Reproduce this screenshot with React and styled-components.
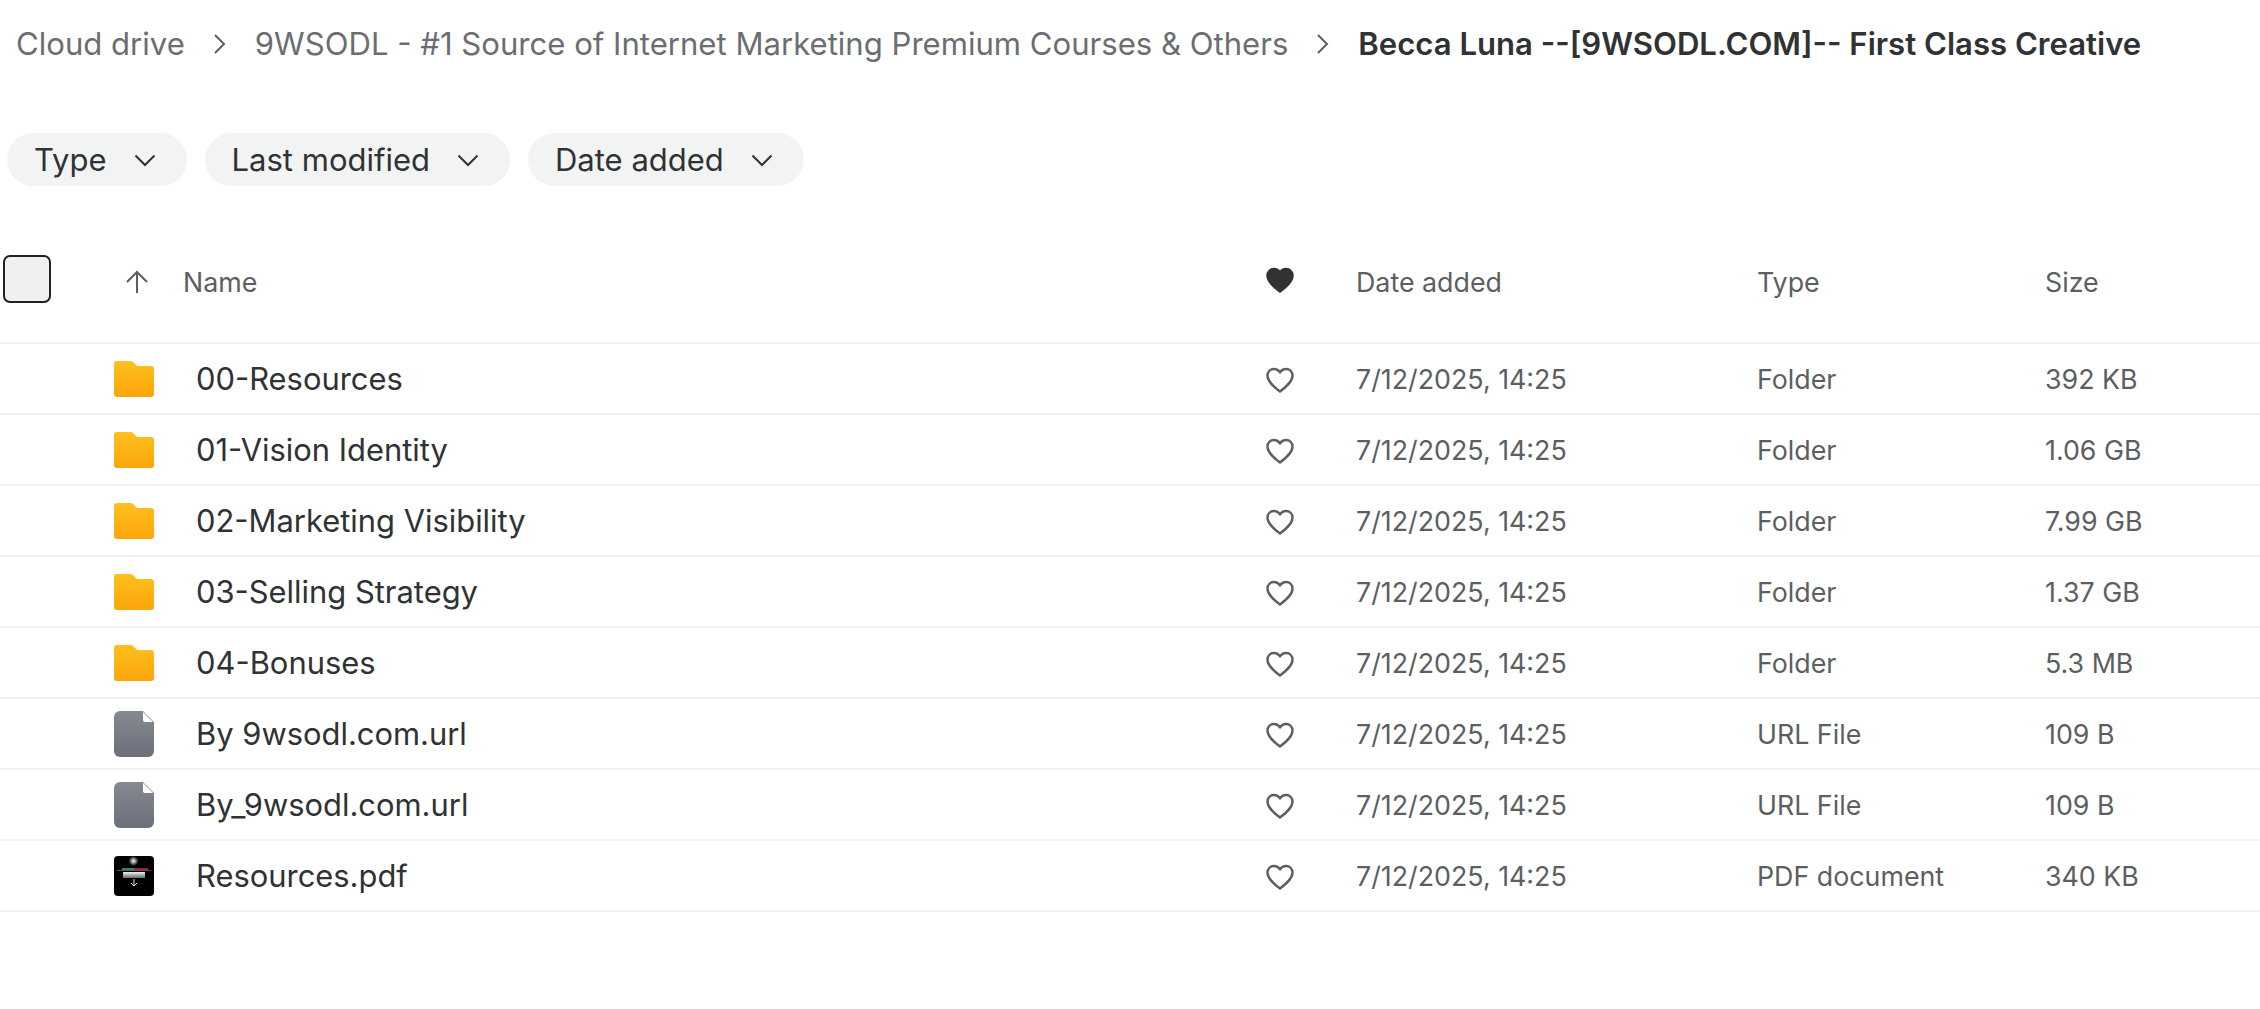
import React from "react";
import styled, { createGlobalStyle } from "styled-components";

const Global = createGlobalStyle`
  html, body { margin: 0; padding: 0; background: #fff; }
  body { font-family: "Inter", "Liberation Sans", sans-serif; color: #303233; }
`;
const Page = styled.div`
  width: 2260px;
  height: 1009px;
  overflow: hidden;
  background: #fff;
`;
const Breadcrumb = styled.nav`
  display: flex;
  align-items: center;
  height: 88px;
  padding-left: 16px;
  font-size: 31.1px;
  white-space: nowrap;
`;
const Crumb = styled.span`
  color: ${(p) => (p.$current ? "#303233" : "#6b6e70")};
  font-weight: ${(p) => (p.$current ? 600 : 400)};
`;
const CrumbSep = styled.svg`
  width: 24px;
  height: 24px;
  margin: 0 23px;
  fill: none;
  stroke: #5c5f61;
  stroke-width: 2;
  flex: none;
`;
const Filters = styled.div`
  display: flex;
  gap: 18px;
  padding: 45px 0 0 7px;
`;
const Chip = styled.div`
  display: flex;
  align-items: center;
  gap: 26px;
  height: 53px;
  padding: 0 30px 0 27px;
  border-radius: 27px;
  background: #f2f4f4;
  font-size: 31px;
  color: #303233;
`;
const Chevron = styled.svg`
  width: 24px;
  height: 24px;
  fill: none;
  stroke: #303233;
  stroke-width: 2;
`;
const columns = "114px 1152px 90px 401px 288px 1fr";
const HeaderRow = styled.div`
  display: grid;
  grid-template-columns: ${columns};
  align-items: center;
  height: 158px;
  padding-top: 36px;
  border-bottom: 2px solid #f0f1f1;
  box-sizing: border-box;
  font-size: 26.8px;
  color: #5c5f61;
`;
const Check = styled.div`
  width: 48px;
  height: 48px;
  margin: 0 0 6px 3px;
  box-sizing: border-box;
  border: 2px solid #1f2122;
  border-radius: 7px;
  background: #eff0f2;
`;
const NameHead = styled.div`
  display: flex;
  align-items: center;
  gap: 33px;
  margin-left: 10px;
`;
const SortArrow = styled.svg`
  width: 26px;
  height: 26px;
  fill: none;
  stroke: #5c5f61;
  stroke-width: 2;
`;
const Row = styled.div`
  display: grid;
  grid-template-columns: ${columns};
  align-items: center;
  height: 71px;
  border-bottom: 2px solid #f0f1f1;
  box-sizing: border-box;
`;
const NameCell = styled.div`
  grid-column: 2;
  display: flex;
  align-items: center;
  gap: 42px;
`;
const FileIcon = styled.svg`
  width: 40px;
  height: ${(p) => p.$h || 40}px;
  display: block;
  flex: none;
`;
const Name = styled.div`
  font-size: 30.9px;
  color: #303233;
  white-space: nowrap;
`;
const Heart = styled.svg`
  width: 32px;
  height: 32px;
  display: block;
  margin: ${(p) => (p.$filled ? "0 0 5px -2px" : "2px 0 0 -2px")};
`;
const Cell = styled.div`
  font-size: 26.8px;
  color: #5c5f61;
  white-space: nowrap;
`;

const ChevronDown = () => (
  <Chevron viewBox="0 0 24 24"><path d="M2.500 7.500L12 17l9.500-9.500" /></Chevron>
);
const HeartIcon = ({ filled }) => (
  <Heart viewBox="0 0 32 32" $filled={filled}>
    <path
      d="M16 27.500C9.500 22.500 3.500 17.500 3.500 11.500 3.500 7.500 6.500 5 9.800 5c2.600 0 4.900 1.300 6.200 3.500C17.300 6.300 19.600 5 22.200 5c3.300 0 6.300 2.500 6.300 6.500 0 6-6 11-12.500 16z"
      fill={filled ? "#303233" : "none"}
      stroke={filled ? "#303233" : "#5c5f61"}
      strokeWidth="2.400"
      strokeLinejoin="round"
    />
  </Heart>
);
const Folder = () => (
  <FileIcon viewBox="0 0 40 40">
    <defs>
      <linearGradient id="fold" x1="0" y1="0" x2="0" y2="1">
        <stop offset="0" stopColor="#ffc01e" />
        <stop offset="1" stopColor="#fba50a" />
      </linearGradient>
    </defs>
    <path d="M0 5a3 3 0 0 1 3-3h13.500c1 0 1.900.4 2.600 1.100L23 7h14a3 3 0 0 1 3 3v25a3 3 0 0 1-3 3H3a3 3 0 0 1-3-3z" fill="url(#fold)" />
  </FileIcon>
);
const Generic = () => (
  <FileIcon viewBox="0 0 40 46" $h={46}>
    <defs>
      <linearGradient id="gen" x1="0" y1="0" x2="0" y2="1">
        <stop offset="0" stopColor="#858a92" />
        <stop offset="1" stopColor="#6b6f79" />
      </linearGradient>
    </defs>
    <path d="M6 0h23l11 11v29a6 6 0 0 1-6 6H6a6 6 0 0 1-6-6V6a6 6 0 0 1 6-6z" fill="url(#gen)" />
    <path d="M29 1l10 10h-8a2 2 0 0 1-2-2z" fill="#fff" />
  </FileIcon>
);
const Pdf = () => (
  <FileIcon viewBox="0 0 40 40">
    <defs>
      <linearGradient id="bar" x1="0" y1="0" x2="0" y2="1">
        <stop offset="0" stopColor="#f2f2f2" />
        <stop offset="1" stopColor="#6a6a6a" />
      </linearGradient>
      <radialGradient id="glow">
        <stop offset="0" stopColor="#fff" />
        <stop offset="1" stopColor="#000" />
      </radialGradient>
    </defs>
    <rect width="40" height="40" rx="4" fill="#000" />
    <circle cx="19.500" cy="5" r="5" fill="url(#glow)" />
    <rect x="3" y="14" width="34" height="1" fill="#555" />
    <rect x="8" y="12" width="12" height="2" fill="#2f8f4a" />
    <rect x="20" y="12" width="14" height="2" fill="#a01c48" />
    <rect x="9" y="16" width="22" height="6" fill="url(#bar)" />
    <path d="M20 23v7M17 27l3 3 3-3" stroke="#ddd" strokeWidth="1" fill="none" />
  </FileIcon>
);

const files = [
  ["00-Resources", "Folder", "392 KB", Folder],
  ["01-Vision Identity", "Folder", "1.06 GB", Folder],
  ["02-Marketing Visibility", "Folder", "7.99 GB", Folder],
  ["03-Selling Strategy", "Folder", "1.37 GB", Folder],
  ["04-Bonuses", "Folder", "5.3 MB", Folder],
  ["By 9wsodl.com.url", "URL File", "109 B", Generic],
  ["By_9wsodl.com.url", "URL File", "109 B", Generic],
  ["Resources.pdf", "PDF document", "340 KB", Pdf],
];

export default function App() {
  return (
    <Page>
      <Global />
      <Breadcrumb>
        <Crumb>Cloud drive</Crumb>
        <CrumbSep viewBox="0 0 24 24"><path d="M7 3l9 9-9 9" /></CrumbSep>
        <Crumb>9WSODL - #1 Source of Internet Marketing Premium Courses &amp; Others</Crumb>
        <CrumbSep viewBox="0 0 24 24"><path d="M7 3l9 9-9 9" /></CrumbSep>
        <Crumb $current>Becca Luna --[9WSODL.COM]-- First Class Creative</Crumb>
      </Breadcrumb>
      <Filters>
        <Chip>Type<ChevronDown /></Chip>
        <Chip>Last modified<ChevronDown /></Chip>
        <Chip>Date added<ChevronDown /></Chip>
      </Filters>
      <HeaderRow>
        <Check />
        <NameHead>
          <SortArrow viewBox="0 0 26 26"><path d="M13 24V3M3 13L13 3l10 10" /></SortArrow>
          Name
        </NameHead>
        <HeartIcon filled />
        <Cell>Date added</Cell>
        <Cell>Type</Cell>
        <Cell>Size</Cell>
      </HeaderRow>
      {files.map(([name, type, size, Icon]) => (
        <Row key={name}>
          <NameCell><Icon /><Name>{name}</Name></NameCell>
          <HeartIcon />
          <Cell>7/12/2025, 14:25</Cell>
          <Cell>{type}</Cell>
          <Cell>{size}</Cell>
        </Row>
      ))}
    </Page>
  );
}
